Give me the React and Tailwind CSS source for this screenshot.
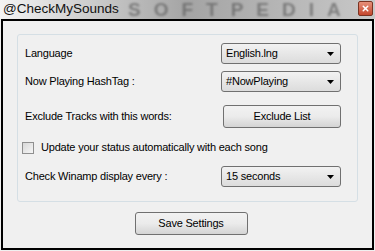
import { X } from 'lucide-react';

function Select({ value }) {
  return (
    <div className="flex h-[21px] w-[120px] items-center justify-between rounded-[3px] border border-[#707070] bg-gradient-to-b from-[#f2f2f2] to-[#dcdcdc] pl-[4px] pr-[6px]">
      <span className="text-[11px] tracking-[-0.2px] text-black">{value}</span>
      <svg width="7" height="4" viewBox="0 0 7 4">
        <path d="M0 0h7L3.5 4z" fill="#000" />
      </svg>
    </div>
  );
}

function Button({ children, className }) {
  return (
    <div
      className={`flex items-center justify-center rounded-[3px] border border-[#707070] bg-gradient-to-b from-[#f2f2f2] via-[#ebebeb] to-[#d4d4d4] text-[11px] tracking-[-0.2px] text-black ${className}`}
    >
      {children}
    </div>
  );
}

function Row({ label, children, className }) {
  return (
    <div className={`flex items-center justify-between ${className}`}>
      <span className="text-[11px] tracking-[-0.2px] text-black">{label}</span>
      {children}
    </div>
  );
}

export default function App() {
  return (
    <div className="h-[251px] w-[375px] overflow-hidden bg-[#f0f0f0] font-['Liberation_Sans',Arial,sans-serif]">
      <div className="relative flex h-[19px] items-center bg-gradient-to-r from-[#f4f4f4] via-[#a4a4a4] to-[#c8c8c8] pl-[3px]">
        <span className="pointer-events-none absolute left-[128px] top-0 select-none text-[19px] font-bold leading-[19px] tracking-[13px] text-[#555] opacity-60 blur-[1.2px]">
          SOFTPEDIA
        </span>
        <span className="relative text-[13.5px] text-[#111]">@CheckMySounds</span>
        <div className="absolute right-[2px] top-[1px] flex h-[15px] w-[15px] items-center justify-center rounded-[2px] border border-[#7a3322] bg-gradient-to-b from-[#e6907a] to-[#c4452c]">
          <X className="h-[9px] w-[9px] text-white" strokeWidth={4} />
        </div>
      </div>
      <div className="mx-[1px] h-[231px] border-2 border-black bg-[#f0f0f0] px-[14px] pt-[13px]">
        <div className="flex h-[168px] flex-col rounded-[3px] border border-[#d5dfe5] bg-[#f0f0f0] pl-[7px] pr-[16px] pt-[8px]">
          <Row label="Language" className="h-[21px]">
            <Select value="English.lng" />
          </Row>
          <Row label="Now Playing HashTag :" className="mt-[7px] h-[21px]">
            <Select value="#NowPlaying" />
          </Row>
          <Row label="Exclude Tracks with this words:" className="mt-[13px] h-[23px]">
            <Button className="h-[23px] w-[118px]">Exclude List</Button>
          </Row>
          <div className="mt-[13px] flex h-[13px] items-center">
            <div className="ml-[-3px] h-[12px] w-[12px] border border-[#8f8f8f] bg-gradient-to-br from-[#d8d8d8] to-[#f6f6f6]" />
            <span className="ml-[7px] text-[11px] tracking-[-0.2px] text-black">Update your status automatically with each song</span>
          </div>
          <Row label="Check Winamp display every :" className="mt-[12px] h-[21px]">
            <Select value="15 seconds" />
          </Row>
        </div>
        <div className="mt-[10px] flex justify-center">
          <Button className="ml-[7px] h-[23px] w-[113px]">Save Settings</Button>
        </div>
      </div>
    </div>
  );
}
